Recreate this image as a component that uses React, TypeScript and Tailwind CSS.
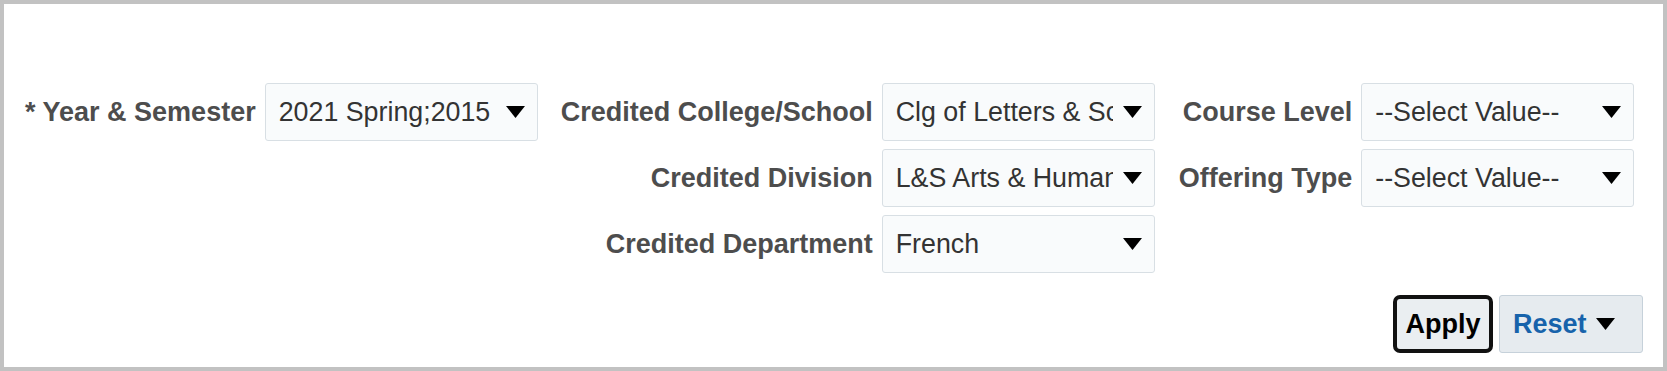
import React from 'react';

const font = { fontFamily: '"Liberation Sans", Arial, sans-serif' };

const Caret: React.FC<{ className?: string }> = ({ className = '' }) => (
  <svg viewBox="0 0 19 12" className={`w-[19px] h-[12px] shrink-0 ${className}`}>
    <polygon points="0,0 19,0 9.5,12" fill="#000" />
  </svg>
);

const Select: React.FC<{ value: string }> = ({ value }) => (
  <div className="flex items-center w-[273px] h-[58px] pl-[13px] pr-[12px] bg-[#f9fbfc] border border-[#d8dfe4] rounded-[3px]">
    <span className="flex-1 min-w-0 overflow-hidden whitespace-nowrap text-[26.8px] text-[#333333] mr-[10px] leading-[1.3]">
      {value}
    </span>
    <Caret />
  </div>
);

const Label: React.FC<{ children: React.ReactNode }> = ({ children }) => (
  <div className="text-right font-bold text-[27px] text-[#4d4d4d] whitespace-nowrap leading-none">
    {children}
  </div>
);

const App: React.FC = () => {
  return (
    <div
      style={font}
      className="w-[1667px] h-[371px] bg-white border-[4px] border-[#c2c2c2] flex flex-col"
    >
      <div className="flex items-start pt-[79px] pl-[21px]">
        <div className="grid grid-cols-[auto_auto] items-center gap-x-[9px] gap-y-[8px]">
          <Label>* Year &amp; Semester</Label>
          <Select value="2021 Spring;2015" />
        </div>

        <div className="grid grid-cols-[auto_auto] items-center gap-x-[9px] gap-y-[8px] ml-[23px]">
          <Label>Credited College/School</Label>
          <Select value="Clg of Letters & Science" />
          <Label>Credited Division</Label>
          <Select value="L&S Arts & Humanities" />
          <Label>Credited Department</Label>
          <Select value="French" />
        </div>

        <div className="grid grid-cols-[auto_auto] items-center gap-x-[9px] gap-y-[8px] ml-[24px]">
          <Label>Course Level</Label>
          <Select value="--Select Value--" />
          <Label>Offering Type</Label>
          <Select value="--Select Value--" />
        </div>
      </div>

      <div className="flex justify-end items-center gap-x-[6px] pr-[20px] mt-[22px]">
        <button
          type="button"
          className="h-[58px] w-[100px] flex items-center justify-center border-[4px] border-[#111111] rounded-[7px] bg-[#eaeef1] text-[27px] font-bold text-black leading-none"
        >
          Apply
        </button>
        <button
          type="button"
          className="h-[58px] w-[144px] flex items-center pl-[13px] border border-[#c6d1da] rounded-[3px] bg-[#e6ebef] text-[27px] font-bold text-[#1763ab] leading-none"
        >
          Reset
          <Caret className="ml-[9px]" />
        </button>
      </div>
    </div>
  );
};

export default App;
